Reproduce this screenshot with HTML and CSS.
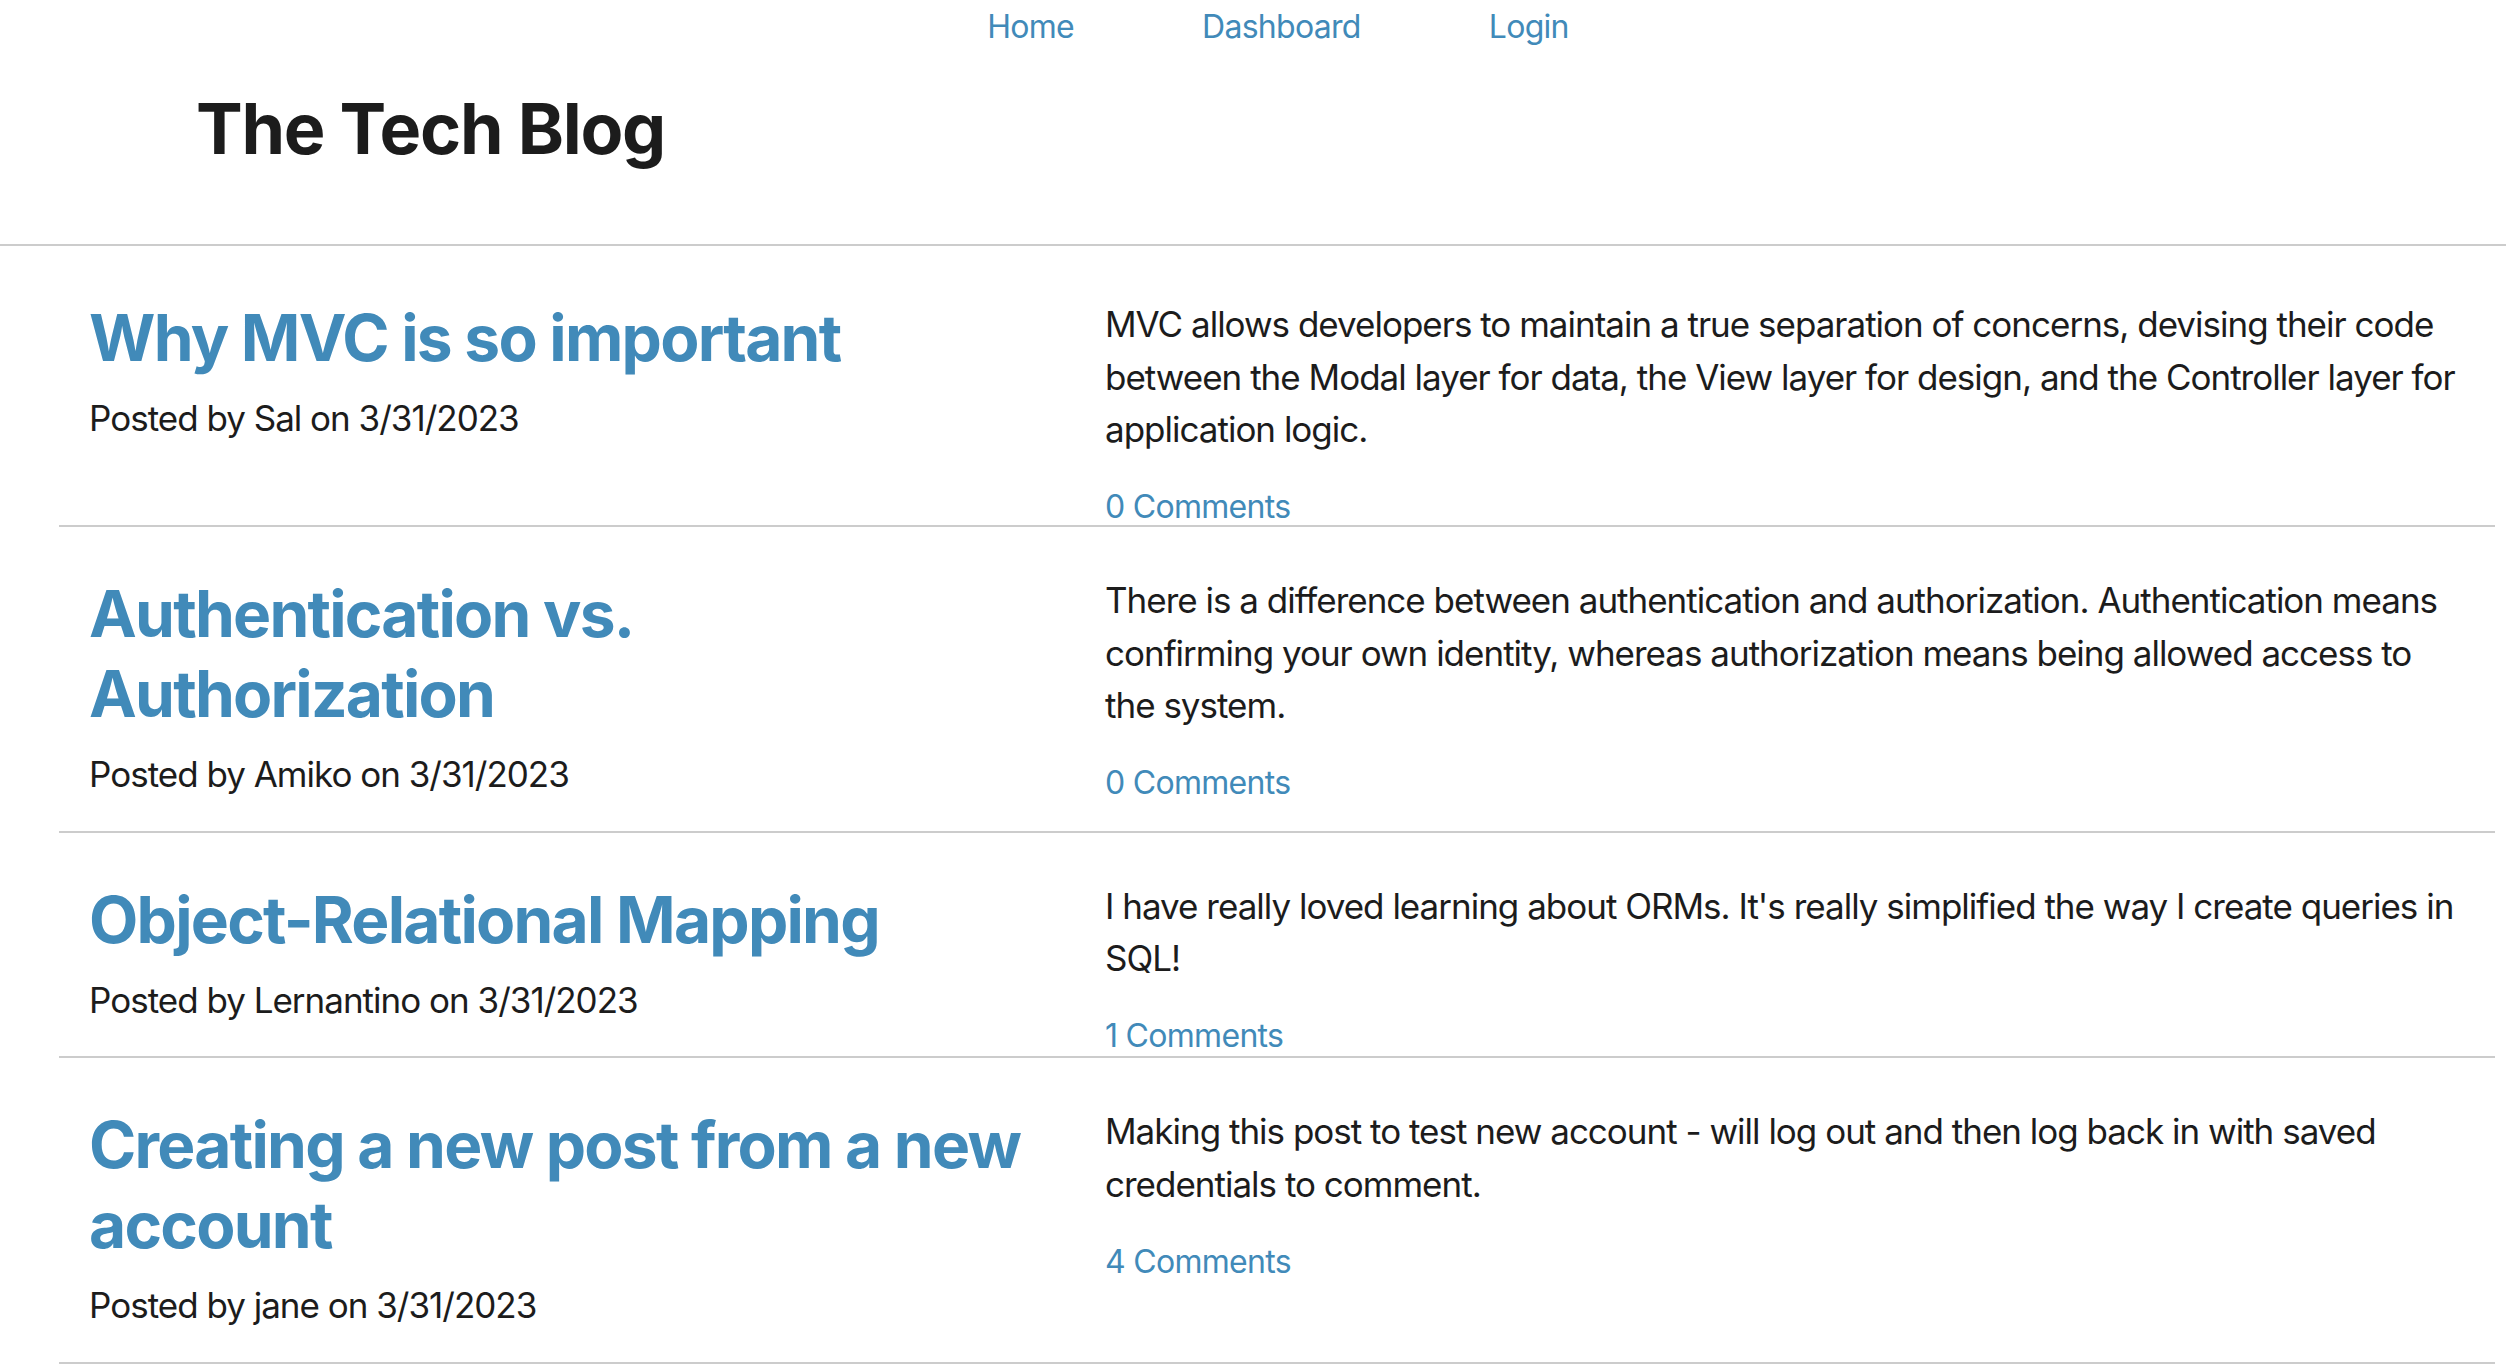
FILE: index.html
```html
<!DOCTYPE html>
<html lang="en">
<head>
<meta charset="utf-8">
<title>The Tech Blog</title>
<link rel="stylesheet" href="styles.css">
</head>
<body>
<header class="site-header">
  <nav class="nav">
    <a class="nav-link" href="#">Home</a>
    <a class="nav-link" href="#">Dashboard</a>
    <a class="nav-link" href="#">Login</a>
  </nav>
  <h1 class="site-title">The Tech Blog</h1>
</header>
<main class="posts">
  <article class="post">
    <div class="post-meta">
      <h2 class="post-title"><a href="#">Why MVC is so important</a></h2>
      <p class="post-byline">Posted by Sal on 3/31/2023</p>
    </div>
    <div class="post-body">
      <p class="post-text">MVC allows developers to maintain a true separation of concerns, devising their code between the Modal layer for data, the View layer for design, and the Controller layer for application logic.</p>
      <a class="post-comments" href="#">0 Comments</a>
    </div>
  </article>
  <article class="post">
    <div class="post-meta">
      <h2 class="post-title"><a href="#">Authentication vs. Authorization</a></h2>
      <p class="post-byline">Posted by Amiko on 3/31/2023</p>
    </div>
    <div class="post-body">
      <p class="post-text">There is a difference between authentication and authorization. Authentication means confirming your own identity, whereas authorization means being allowed access to the system.</p>
      <a class="post-comments" href="#">0 Comments</a>
    </div>
  </article>
  <article class="post">
    <div class="post-meta">
      <h2 class="post-title"><a href="#">Object-Relational Mapping</a></h2>
      <p class="post-byline">Posted by Lernantino on 3/31/2023</p>
    </div>
    <div class="post-body">
      <p class="post-text">I have really loved learning about ORMs. It's really simplified the way I create queries in SQL!</p>
      <a class="post-comments" href="#">1 Comments</a>
    </div>
  </article>
  <article class="post">
    <div class="post-meta">
      <h2 class="post-title"><a href="#">Creating a new post from a new account</a></h2>
      <p class="post-byline">Posted by jane on 3/31/2023</p>
    </div>
    <div class="post-body">
      <p class="post-text">Making this post to test new account - will log out and then log back in with saved credentials to comment.</p>
      <a class="post-comments" href="#">4 Comments</a>
    </div>
  </article>
</main>
</body>
</html>
```

FILE: styles.css
```css
html, body {
  margin: 0;
  padding: 0;
  background: #ffffff;
}

body {
  font-family: Inter, "Noto Sans", "Liberation Sans", sans-serif;
  color: #1c1c1c;
}

a {
  color: #418ab9;
  text-decoration: none;
}

.site-header {
  border-bottom: 2px solid #cccccc;
  padding: 7px 0 73px 0;
}

.nav {
  display: flex;
  justify-content: center;
  gap: 128px;
  padding-left: 50px;
  font-size: 32px;
  line-height: 39px;
  letter-spacing: -0.7px;
}

.site-title {
  margin: 40px 0 0 0;
  padding-left: 196px;
  font-size: 70px;
  line-height: 85px;
  font-weight: 700;
  letter-spacing: -1.25px;
  color: #1c1c1c;
}

.posts {
  padding-top: 5px;
}

.post {
  display: grid;
  grid-template-columns: 950px 1fr;
  column-gap: 66px;
  margin: 0 11px 0 59px;
  padding: 47px 32px 0 30px;
  border-bottom: 2px solid #cccccc;
  font-size: 35px;
  letter-spacing: -1px;
}

.post-title {
  margin: 0 0 14px 0;
  font-size: 64px;
  line-height: 80px;
  font-weight: 700;
  letter-spacing: -1.75px;
}

.post-byline {
  margin: 0 0 30px 0;
  line-height: 52.5px;
}

.post-text {
  margin: 0 0 32.5px 0;
  line-height: 52.5px;
}

.post-comments {
  display: block;
  font-size: 32px;
  line-height: 37px;
  letter-spacing: -0.7px;
}
```
